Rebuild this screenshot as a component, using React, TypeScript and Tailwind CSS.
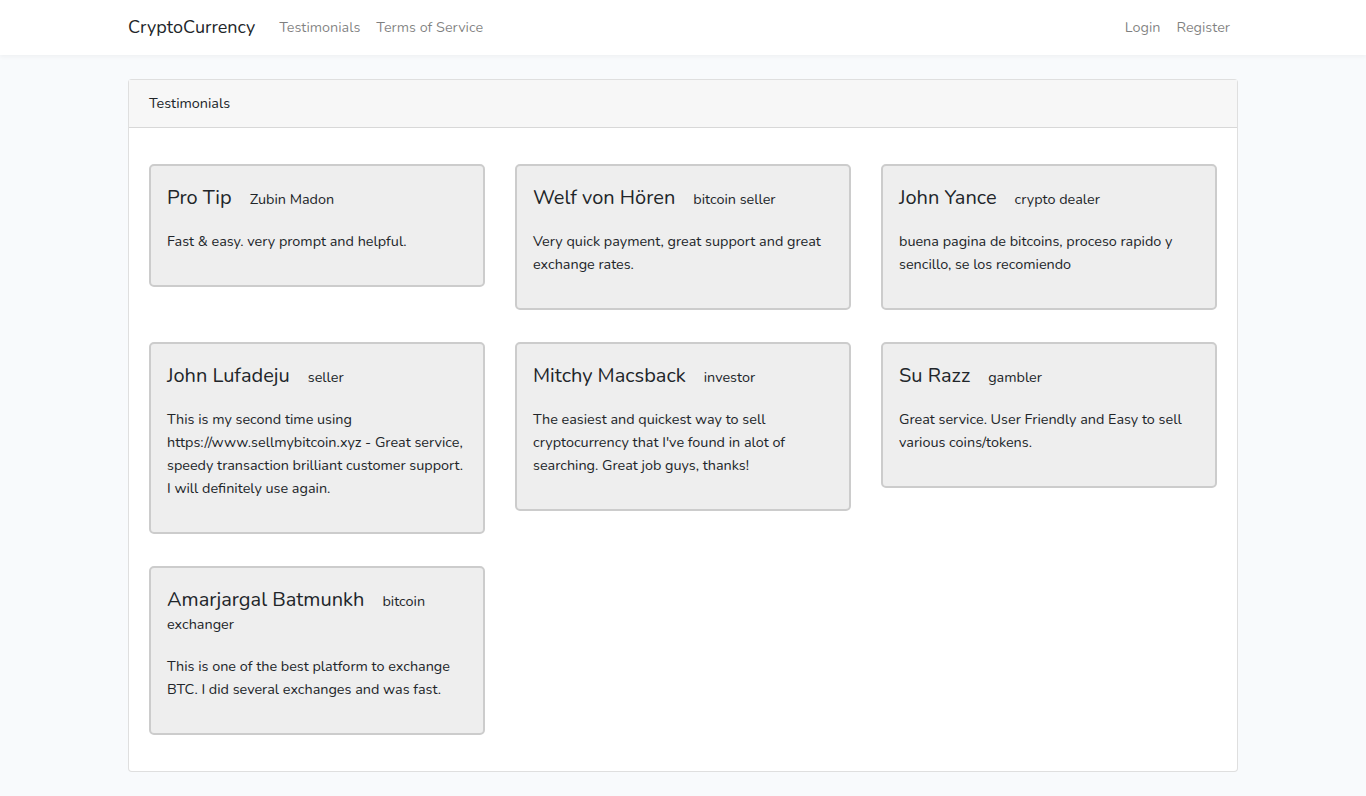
const testimonials = [
  {
    name: "Pro Tip",
    role: "Zubin Madon",
    lines: ["Fast & easy. very prompt and helpful."],
  },
  {
    name: "Welf von Hören",
    role: "bitcoin seller",
    lines: ["Very quick payment, great support and great", "exchange rates."],
  },
  {
    name: "John Yance",
    role: "crypto dealer",
    lines: ["buena pagina de bitcoins, proceso rapido y", "sencillo, se los recomiendo"],
  },
  {
    name: "John Lufadeju",
    role: "seller",
    lines: [
      "This is my second time using",
      "https://www.sellmybitcoin.xyz - Great service,",
      "speedy transaction brilliant customer support.",
      "I will definitely use again.",
    ],
  },
  {
    name: "Mitchy Macsback",
    role: "investor",
    lines: [
      "The easiest and quickest way to sell",
      "cryptocurrency that I've found in alot of",
      "searching. Great job guys, thanks!",
    ],
  },
  {
    name: "Su Razz",
    role: "gambler",
    lines: ["Great service. User Friendly and Easy to sell", "various coins/tokens."],
  },
  {
    name: "Amarjargal Batmunkh",
    role: "bitcoin exchanger",
    lines: ["This is one of the best platform to exchange", "BTC. I did several exchanges and was fast."],
  },
];

export default function App() {
  return (
    <div className="min-h-screen bg-[#f8fafc] font-['Nunito','Lato',sans-serif] text-[14.4px] leading-[1.6] text-[#212529]">
      <nav className="bg-white shadow-[0_2px_4px_rgba(0,0,0,0.04)]">
        <div className="mx-auto flex h-[55px] max-w-[1140px] items-center px-[15px]">
          <a className="mr-4 text-[18px] text-[#212529]" href="#">
            CryptoCurrency
          </a>
          <div className="flex">
            <a className="px-2 text-[rgba(0,0,0,0.5)]" href="#">
              Testimonials
            </a>
            <a className="px-2 text-[rgba(0,0,0,0.5)]" href="#">
              Terms of Service
            </a>
          </div>
          <div className="ml-auto flex">
            <a className="px-2 text-[rgba(0,0,0,0.5)]" href="#">
              Login
            </a>
            <a className="px-2 text-[rgba(0,0,0,0.5)]" href="#">
              Register
            </a>
          </div>
        </div>
      </nav>

      <main className="py-6">
        <div className="mx-auto max-w-[1140px] px-[15px]">
          <div className="rounded border border-[rgba(0,0,0,0.125)] bg-white">
            <div className="border-b border-[rgba(0,0,0,0.125)] bg-[#f7f7f7] px-5 py-3">Testimonials</div>
            <div className="grid grid-cols-3 items-start gap-x-[30px] p-5">
              {testimonials.map((t) => (
                <div
                  key={t.name}
                  className="my-4 rounded-[5px] border-2 border-[#cccccc] bg-[#eeeeee] px-4 pt-[20px] pb-4"
                >
                  <div className="mb-[21px] text-[20px] leading-[23px]">
                    {t.name}
                    <span className="ml-[18px] text-[14.4px] leading-[16px]">{t.role}</span>
                  </div>
                  <p className="mb-4 whitespace-nowrap leading-[23px]">
                    {t.lines.map((line, i) => (
                      <span key={i} className="block">
                        {line}
                      </span>
                    ))}
                  </p>
                </div>
              ))}
            </div>
          </div>
        </div>
      </main>
    </div>
  );
}
